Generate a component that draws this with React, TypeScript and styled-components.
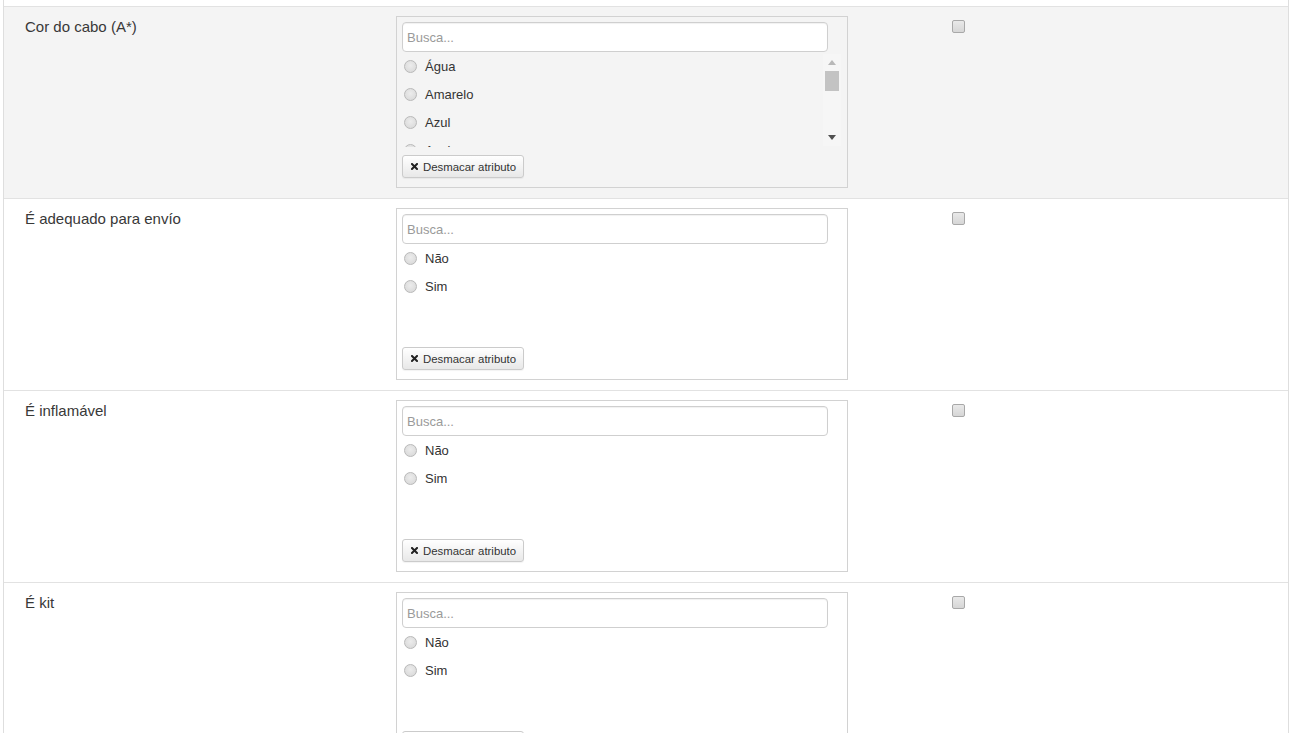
import React from 'react';
import styled, { createGlobalStyle } from 'styled-components';

const Global = createGlobalStyle`
  html, body { margin: 0; padding: 0; background: #fff; overflow: hidden; }
  body { font-family: "Liberation Sans", Arial, sans-serif; color: #333; }
  * { box-sizing: border-box; }
`;

const Table = styled.div`
  margin-left: 3px;
  width: 1286px;
  padding-top: 6px;
  border-left: 1px solid #dedede;
  border-right: 1px solid #dedede;
`;

const Row = styled.div<{ $shaded?: boolean }>`
  display: grid;
  grid-template-columns: 384px 556px 1fr;
  border-top: 1px solid #e2e2e2;
  background: ${(p) => (p.$shaded ? '#f4f4f4' : '#fff')};
`;

const Cell = styled.div`
  padding: 9px 8px 10px;
`;

const LabelCell = styled(Cell)`
  padding-left: 21px;
  padding-top: 10px;
  font-size: 15px;
  line-height: 20px;
  color: #383838;
`;

const Picker = styled.div`
  width: 452px;
  height: 172px;
  border: 1px solid #d2d2d2;
  padding: 5px 5px 9px 5px;
  display: flex;
  flex-direction: column;
`;

const Search = styled.input`
  width: 426px;
  height: 30px;
  flex: none;
  border: 1px solid #cfcfcf;
  border-radius: 4px;
  padding: 0 4px;
  font-family: "Liberation Sans", Arial, sans-serif;
  font-size: 13px;
  color: #555;
  background: #fff;
  box-shadow: inset 0 1px 1px rgba(0, 0, 0, 0.06);
  outline: none;
  &::placeholder { color: #9a9a9a; }
`;

const ListArea = styled.div`
  width: 439px;
  height: 95px;
  flex: none;
  display: flex;
`;

const Options = styled.div`
  flex: 1;
  overflow: hidden;
`;

const Option = styled.label`
  height: 28px;
  display: flex;
  align-items: center;
  gap: 8px;
  padding-left: 2px;
  font-size: 13px;
  color: #333;
`;

const Radio = styled.input.attrs({ type: 'radio' })`
  appearance: none;
  margin: 0;
  width: 13px;
  height: 13px;
  border-radius: 50%;
  border: 1px solid #b9b9b9;
  background: radial-gradient(circle at 50% 40%, #ececec 0%, #d6d6d6 100%);
  flex: none;
`;

const ScrollTrack = styled.div`
  width: 18px;
  height: 92px;
  margin-top: 2px;
  background: #f6f6f6;
  display: flex;
  flex-direction: column;
  align-items: center;
`;

const ArrowBox = styled.div`
  height: 17px;
  width: 100%;
  display: flex;
  align-items: center;
  justify-content: center;
`;

const ThumbZone = styled.div`
  flex: 1;
  width: 100%;
  display: flex;
  justify-content: center;
`;

const Thumb = styled.div`
  width: 14px;
  height: 20px;
  background: #c3c3c3;
`;

const ClearButton = styled.button`
  margin-top: 8px;
  align-self: flex-start;
  height: 23px;
  flex: none;
  padding: 0 7px 0 8px;
  display: inline-flex;
  align-items: center;
  gap: 5px;
  border: 1px solid #cbcbcb;
  border-radius: 3px;
  background: linear-gradient(#ffffff, #e8e8e8);
  box-shadow: 0 1px 1px rgba(0, 0, 0, 0.05);
  font-family: "Liberation Sans", Arial, sans-serif;
  font-size: 11.4px;
  color: #333;
  cursor: pointer;
`;

const Check = styled.input.attrs({ type: 'checkbox' })`
  appearance: none;
  margin: 4px 0 0 0;
  width: 13px;
  height: 13px;
  border: 1px solid #a8a8a8;
  border-radius: 2px;
  background: linear-gradient(#e9e9e9, #d6d6d6);
  display: block;
`;

const TimesIcon = () => (
  <svg width="7" height="7" viewBox="0 0 7 7">
    <path d="M1 1 L6 6 M6 1 L1 6" stroke="#222" strokeWidth="2" strokeLinecap="square" />
  </svg>
);

const UpArrow = () => (
  <svg width="8" height="5" viewBox="0 0 8 5">
    <path d="M0 5 L4 0 L8 5 Z" fill="#b8b8b8" />
  </svg>
);

const DownArrow = () => (
  <svg width="8" height="5" viewBox="0 0 8 5">
    <path d="M0 0 L8 0 L4 5 Z" fill="#505050" />
  </svg>
);

type Attr = { label: string; options: string[]; scroll?: boolean; shaded?: boolean };

const attrs: Attr[] = [
  {
    label: 'Cor do cabo (A*)',
    options: ['Água', 'Amarelo', 'Azul', 'Azul aço', 'Bege', 'Branco', 'Cinza', 'Laranja', 'Marrom', 'Preto', 'Verde'],
    scroll: true,
    shaded: true,
  },
  { label: 'É adequado para envío', options: ['Não', 'Sim'] },
  { label: 'É inflamável', options: ['Não', 'Sim'] },
  { label: 'É kit', options: ['Não', 'Sim'] },
];

export default function App() {
  return (
    <>
      <Global />
      <Table>
        {attrs.map((a, i) => (
          <Row key={i} $shaded={a.shaded}>
            <LabelCell>{a.label}</LabelCell>
            <Cell>
              <Picker>
                <Search placeholder="Busca..." />
                <ListArea>
                  <Options>
                    {a.options.map((o) => (
                      <Option key={o}>
                        <Radio name={`attr-${i}`} />
                        {o}
                      </Option>
                    ))}
                  </Options>
                  {a.scroll && (
                    <ScrollTrack>
                      <ArrowBox><UpArrow /></ArrowBox>
                      <ThumbZone><Thumb /></ThumbZone>
                      <ArrowBox><DownArrow /></ArrowBox>
                    </ScrollTrack>
                  )}
                </ListArea>
                <ClearButton>
                  <TimesIcon />
                  Desmacar atributo
                </ClearButton>
              </Picker>
            </Cell>
            <Cell>
              <Check />
            </Cell>
          </Row>
        ))}
      </Table>
    </>
  );
}
